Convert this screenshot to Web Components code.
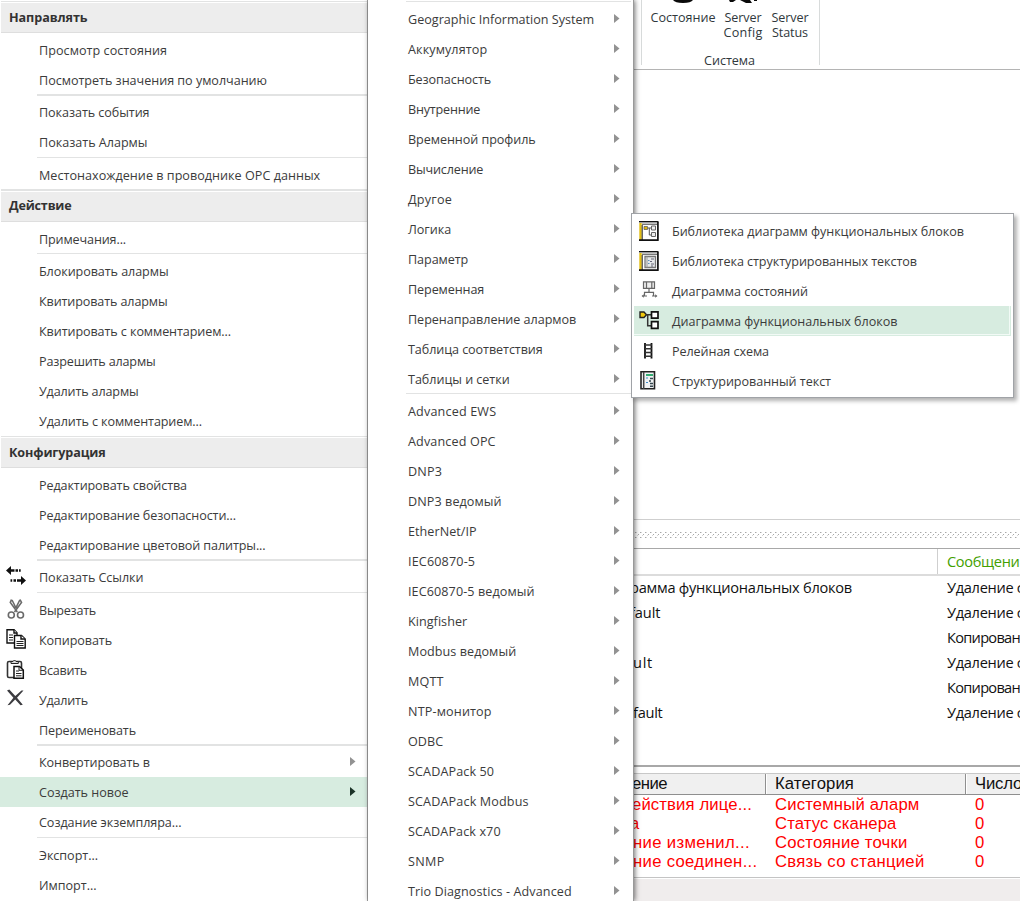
<!DOCTYPE html>
<html lang="ru">
<head>
<meta charset="utf-8">
<title>Context menu</title>
<style>
html,body{margin:0;height:901px;overflow:hidden;background:#fff}
body{font-family:"Open Sans","Noto Sans",sans-serif;font-size:12.6px;color:#3b3b3b}
</style>
</head>
<body>
<app-screen></app-screen>
<script>
/* Text set to a given advance width */
class FitText extends HTMLElement{
  connectedCallback(){
    const r=this.attachShadow({mode:'open'});
    r.innerHTML='<style>:host{display:inline-block;white-space:pre}</style><span><slot></slot></span>';
    const w=+this.getAttribute('w'),n=this.textContent.length;
    if(w){const nat=r.querySelector('span').getBoundingClientRect().width;this.style.letterSpacing=((w-nat)/n).toFixed(3)+'px';}
  }
}
const LIB='<path d="M1 1.500h18v17.500H1z" fill="#fff"/><path d="M.3 2h2.400v17H.3z" fill="#e3bd10"/><path d="M3.200 4v15" stroke="#222"/><path d="M0 .7h19.500" stroke="#111" stroke-width="1.400"/><path d="M3 3.300h15" stroke="#777" stroke-width="1.500"/><path d="M18.900 1v18.200M0 19.200h19.700" stroke="#111" stroke-width="1.700"/>';
const ICONS={
links:'<path d="M0 4.500 5 0v3.300h3.500v2.400H5V9zM9.500 3.300h2.500v2.400H9.500zM13 3.300h1.700v2.400H13z" fill="#111"/><path d="M20 14.500 15 10v3.300h-4v2.400h4V19zM7.500 13.300H10v2.400H7.500zM4.500 13.300h1.700v2.400H4.500z" fill="#111"/>',
cut:'<g fill="none" stroke="#6a6a6a" stroke-width="1.600"><path d="M5.500.5 4.300 3.500l7 9.500M14 .5l1.500 3-7 9.500M6 1l4 8M13.800 1l-4 8"/><ellipse cx="5.300" cy="16" rx="3" ry="3"/><ellipse cx="14.500" cy="16" rx="3" ry="3"/></g>',
copy:'<g fill="#fff" stroke="#111" stroke-width="1.400"><path d="M1 .8h7l3 3V14H1z"/><path d="M8 .8V4h3" /><path d="M8.500 6.500h7l3.700 3.500v9H8.500z"/><path d="M15 6.500V10h4"/></g><path d="M3 6h4M3 8.500h4M3 11h4M10.500 12.500h7M10.500 14.500h7M10.500 16.500h7" stroke="#222"/>',
paste:'<rect x="1.500" y="2.500" width="14" height="16" rx="1.500" fill="#fff" stroke="#333" stroke-width="1.600"/><path d="M5 4.500V2.500h2Q8.500-.5 10 2.500h2.300v2z" fill="#ddd" stroke="#222"/><path d="M8 7.500h5.500L17.300 11v8.300H8z" fill="#fff" stroke="#111" stroke-width="1.500"/><path d="M13 7.500V11.300H17M10 12h3M10 14.500h5.500M10 16.800h5.500" fill="none" stroke="#222"/>',
del:'<path d="M1 1.500 3.300.5l6 6.500L15.500 1.500l2 0L11 8.700l5.800 7-2.300.5L9.200 10.500 4 15.800l-2.500.4L7.400 8.800z" fill="#3c3c40"/>',
fbdlib:LIB+'<path d="M5 5.500h3.500v3H5z" fill="#e0b513" stroke="#555" stroke-width=".7"/><path d="M8.500 7h3.500M10.300 7v7H12" fill="none" stroke="#555"/><path d="M12.500 5h4v4h-4zM12.500 11.500h4v4h-4z" fill="#eee" stroke="#666"/>',
stlib:LIB+'<path d="M6 5.500h10.500v11H6z" fill="#e6e8ea" stroke="#777" stroke-width="1.300"/><path d="M8 5.500v11" stroke="#999"/><path d="M12 8h3M11 10.500h2M12 13h3M12 15h2" stroke="#667"/><path d="M9 9.500h1.500M9 12.500h1.500" stroke="#5791c0"/>',
state:'<g fill="none" stroke="#666" stroke-width="1.200"><path d="M4.500.8h11v6.500h-11zM7.500.8v6.500M12.800.8v6.500" fill="#eee"/><path d="M10 7.300v4M5.500 15v-3.700h9V15M3 15h5M13 15h5"/></g><path d="m2.500 15 2.500-1.800v3.600zM18.500 15 16 13.200v3.600z" fill="#777"/>',
fbd:'<path d="M1 1h4l2.500 2.700L5 6.500H1z" fill="#f0c80c" stroke="#222" stroke-width="1.400"/><path d="M7.500 3.700H12M8.700 3.700v11H12" fill="none" stroke="#333" stroke-width="1.500"/><path d="M12.500.9h6.500v6.300h-6.500zM12.500 10.700h6.500v6.600h-6.500z" fill="#fff" stroke="#111" stroke-width="1.700"/>',
ladder:'<path d="M6 2v15.500M12.500 2v15.500" stroke="#111" stroke-width="1.800"/><path d="M6 4h7M6 7.800h7M6 11.500h7M6 15.200h7" stroke="#333" stroke-width="1.500"/>',
st:'<path d="M2 .8h13.500v17H2z" fill="#f1f3f4" stroke="#222" stroke-width="1.600"/><path d="M4.700 1v17" stroke="#444" stroke-width="1.500"/><path d="M7 4h7" stroke="#33ad73" stroke-width="2"/><path d="M11 7.500h3M10 10h2M11 12.500h3M11 15.300h3" stroke="#36474f" stroke-width="1.400"/><path d="M7 7h2M7 11.500h2" stroke="#3f8cc8" stroke-width="1.200"/>'
};
class MenuItem extends HTMLElement{
  connectedCallback(){
    const i=this.getAttribute('icon'),arrow=this.hasAttribute('sub');
    this.attachShadow({mode:'open'}).innerHTML=`<style>
:host{display:flex;height:30px;align-items:center;flex:none;position:relative;color:#3b3b3b;line-height:17px}
:host([active]){background:#d7ece0;box-shadow:var(--hs,none)}
.i{width:20px;height:20px;margin:0 0 var(--ib,2px) var(--ix,6px);flex:none;overflow:visible}
.g{width:calc(var(--tx,39px) - var(--ix,6px) - 20px);flex:none}
.t{flex:1;white-space:nowrap;padding-top:1px}
.a{width:6px;height:9px;margin:0 var(--ar,11px) var(--ab,1px) 0}
</style><svg class="i" viewBox="0 0 20 20">${ICONS[i]||''}</svg><span class="g"></span><span class="t"><slot></slot></span>${arrow?`<svg class="a" viewBox="0 0 6 9"><path d="M0 0 5.500 4.500 0 9z" fill="${this.hasAttribute('active')?'#1c3328':'#929292'}"/></svg>`:''}`;
  }
}
class MenuHeader extends HTMLElement{
  connectedCallback(){
    const t=+this.getAttribute('top')||1;
    this.attachShadow({mode:'open'}).innerHTML=`<style>
:host{display:block;flex:none;margin-top:${1-t}px;border-top:${t}px solid #e2e3e3;padding:1px 0 2px;margin-left:1px}
div{box-sizing:border-box;height:30px;background:#ededed;border-bottom:1px solid #dedede;padding:${2-t}px 0 0 8px;font-weight:700;line-height:28px;color:#333}
</style><div><slot></slot></div>`;
  }
}
class MenuRule extends HTMLElement{
  connectedCallback(){
    const css={thick:'height:2px;margin-top:-1px;margin-bottom:1px',up:'height:1px;margin-top:-1px;margin-bottom:2px',thin:'height:1px;margin-bottom:2px'}[this.getAttribute('kind')];
    this.attachShadow({mode:'open'}).innerHTML=`<style>
:host{display:block;flex:none;background:#e2e3e3;margin-left:var(--rx,37px);margin-right:var(--rr,0);${css}}
</style>`;
  }
}
class ContextMenu extends HTMLElement{
  connectedCallback(){
    this.attachShadow({mode:'open'}).innerHTML=`<style>
:host{display:flex;flex-direction:column;box-sizing:border-box;background:#fff}
</style>`+this.rows();
  }
  rows(){
    const kinds={'-':'thin','=':'thick','^':'up'};
    return this.data().map(d=>{
      if(kinds[d])return`<menu-rule kind="${kinds[d]}"></menu-rule>`;
      const[t,w,o='']=d;
      if(o.startsWith('H'))return`<menu-header top="${o[1]}"><fit-text w="${w-9}">${t}</fit-text></menu-header>`;
      return`<menu-item ${o}><fit-text w="${w-this.x}">${t}</fit-text></menu-item>`;
    }).join('');
  }
}
class MainMenu extends ContextMenu{
  get x(){return 39}
  data(){return[['Направлять',87.5,'H1'],['Просмотр состояния',167],['Посмотреть значения по умолчанию',267],'=',['Показать события',149.5],['Показать Алармы',147.5],'-',['Местонахождение в проводнике ОРС данных',320.2],
  ['Действие',71.5,'H2'],['Примечания...',126],'^',['Блокировать алармы',168.5],['Квитировать алармы',167.5],['Квитировать с комментарием...',231],['Разрешить алармы',155.5],['Удалить алармы',138.5],['Удалить с комментарием...',202],
  ['Конфигурация',105.5,'H1'],['Редактировать свойства',187],['Редактирование безопасности...',236],['Редактирование цветовой палитры...',265.5],'=',['Показать Ссылки',143.5,'icon="links"'],'-',['Вырезать',96,'icon="cut"'],['Копировать',112,'icon="copy"'],['Всавить',87,'icon="paste"'],['Удалить',88,'icon="del"'],['Переименовать',136],'=',['Конвертировать в',150,'sub'],['Создать новое',128.5,'sub active'],['Создание экземпляра...',181.5],'-',['Экспорт...',98],['Импорт...',96.5]]}
}
class CreateMenu extends ContextMenu{
  get x(){return 408}
  data(){
    const s=a=>a.map(([t,w])=>[t,w+.2,'sub']);
    return[...s([['Geographic Information System',594],['Аккумулятор',487],['Безопасность',491],['Внутренние',480],['Временной профиль',535.500],['Вычисление',483],['Другое',452],['Логика',451],['Параметр',468],['Переменная',484],['Перенаправление алармов',576],['Таблица соответствия',542.5],['Таблицы и сетки',509.5]]),'^',
    ...s([['Advanced EWS',496],['Advanced OPC',495.500],['DNP3',442],['DNP3 ведомый',501.500],['EtherNet/IP',476.500],['IEC60870-5',475],['IEC60870-5 ведомый',534.500],['Kingfisher',467],['Modbus ведомый',516],['MQTT',443.500],['NTP-монитор',491.500],['ODBC',443],['SCADAPack 50',494],['SCADAPack Modbus',528.500],['SCADAPack x70',500.500],['SNMP',444.500],['Trio Diagnostics - Advanced',571.500]])]}
}
class LogicMenu extends ContextMenu{
  get x(){return 672}
  data(){return[['Библиотека диаграмм функциональных блоков',964,'icon="fbdlib"'],['Библиотека структурированных текстов',917,'icon="stlib"'],['Диаграмма состояний',808,'icon="state"'],['Диаграмма функциональных блоков',897.5,'icon="fbd" active'],['Релейная схема',769,'icon="ladder"'],['Структурированный текст',831,'icon="st"']]}
}
class RibbonGroup extends HTMLElement{
  connectedCallback(){
    this.attachShadow({mode:'open'}).innerHTML=`<style>
:host{display:block;height:69px;border-bottom:1px solid #b4b4b4;line-height:15px;color:#30383c;flex:none}
.g{width:177px;height:65px;margin-left:7px;border:solid #d8dbdb;border-width:0 1px;display:flex;flex-direction:column;box-sizing:content-box}
.b{display:grid;grid-template-columns:82px 38px 1fr;height:52px;flex:none;text-align:center;margin-right:1px}
.b div{display:flex;flex-direction:column;align-items:center}
svg{height:10px;width:36px;overflow:visible;display:block}
.n{text-align:center;line-height:16px;margin-right:2px;padding-top:1px}
</style><div class="g"><div class="b">
<div><svg viewBox="0 0 36 10"><path d="M8 0h20q-2 3-10 3T8 0z" fill="#0a0a0a"/></svg><fit-text w="65">Состояние</fit-text></div>
<div><svg viewBox="0 0 36 10"><path d="M4 0h7L8 2H5zM15 0h10l2 3h-6zM29 0h3v1h-3z" fill="#0a0a0a"/></svg><fit-text w="37">Server</fit-text><fit-text w="39">Config</fit-text></div>
<div><svg></svg><fit-text w="37">Server</fit-text><fit-text w="36">Status</fit-text></div>
</div><div class="n"><fit-text w="51">Система</fit-text></div></div>`;
  }
}
class DotSplitter extends HTMLElement{
  connectedCallback(){
    this.attachShadow({mode:'open'}).innerHTML=`<style>
:host{display:block;height:28px;border-top:1px solid #cfcfcf;border-bottom:1px solid #a8a8a8;flex:none}
svg{display:block;width:100%;height:6px;margin-top:12px}
</style><svg shape-rendering="crispEdges"><defs><pattern id="p" width="5" height="5" patternUnits="userSpaceOnUse"><path d="M1 0h1v1H1zM4 2h1v1H4z" fill="#a8a8a8"/><path d="M2 0h1v1H2zM3 3h1v1H3z" fill="#d8d8d8"/></pattern></defs><rect width="100%" height="6" fill="url(#p)"/></svg>`;
  }
}
class EventLog extends HTMLElement{
  connectedCallback(){
    const d=['Удаление с',76.5],k=['Копирован',73];
    const r=[[-4,'рамма функциональных блоков',222,d],[-4,'fault',30.5,d],[0,'','',k],[-1,'ult',20,d],[0,'','',k],[-1,'fault',29.5,d]];
    this.attachShadow({mode:'open'}).innerHTML=`<style>
:host{display:block;height:216px;font-size:14.6px;color:#111;flex:none;overflow:hidden;border-bottom:2px solid #a8a8a8}
div{display:grid;grid-template-columns:304px 82px;height:25px;line-height:25px}
.h{border-bottom:2px solid #dcdcdc;height:25px;line-height:25px;color:#43a000;margin-bottom:-1px}
.h span:first-child{border-right:1px solid #cfcfcf}
span{white-space:nowrap}span+span{padding-left:9px}
</style><div class="h"><span></span><span><fit-text w="72.500">Сообщени</fit-text></span></div>`+r.map(([x,a,w,[b,v]])=>`<div><span style="margin-left:${x}px;margin-right:${-x}px">${a?`<fit-text w="${w}">${a}</fit-text>`:''}</span><span><fit-text w="${v}">${b}</fit-text></span></div>`).join('');
  }
}
class AlarmList extends HTMLElement{
  connectedCallback(){
    const r=[['ействия лице...',120,-2,'Системный аларм',144.500],['а',9,-4,'Статус сканера',121.500],['ние изменил...',117,-1,'Состояние точки',132.500],['ние соединен...',124.500,-1,'Связь со станцией',149.500]];
    this.attachShadow({mode:'open'}).innerHTML=`<style>
:host{display:block;font:16.7px "Liberation Sans",sans-serif;color:#f00;flex:none;padding-top:6px;height:104px;border-bottom:1px solid #c4c4c4;overflow:hidden}
div{display:grid;grid-template-columns:132px 200px 54px;height:19px;line-height:20px}
.h{height:20px;line-height:20px;color:#111;background:#f0f0f0;border-top:1px solid #c8c8c8;border-bottom:1px solid #8f8f8f}
.h span{border-right:1px solid #8f8f8f;box-shadow:1px 0 #fff}
.h span:last-child{border:0;box-shadow:none}
span{white-space:nowrap;padding-left:9px}span:first-child{padding:0}
</style><div class="h"><span><fit-text w="35" style="margin-left:-2px">ение</fit-text></span><span><fit-text w="79">Категория</fit-text></span><span><fit-text w="47">Число</fit-text></span></div>`+r.map(([a,w,x,b,v])=>`<div><span><fit-text w="${w}" style="margin-left:${x}px">${a}</fit-text></span><span><fit-text w="${v}">${b}</fit-text></span><span>0</span></div>`).join('');
  }
}
class AppScreen extends HTMLElement{
  connectedCallback(){
    this.attachShadow({mode:'open'}).innerHTML=`<style>
:host{display:grid;grid-template-columns:368px 266px 386px;width:1020px;height:901px;overflow:hidden;position:relative}
main-menu{border-right:1px solid #a3a3a3;padding-top:1px}
create-menu{border-right:1px solid #999;box-shadow:1px 0 5px rgba(0,0,0,.55);z-index:1;--tx:40px;--ar:13px;--rx:38px;--rr:2px;overflow:hidden;min-width:0}
create-menu::before{content:"";height:1px;margin:1px 2px 2px 38px;background:#e2e3e3;flex:none}
.work{display:flex;flex-direction:column;min-width:0;overflow:hidden}
.canvas{height:449px;flex:none}
.foot{flex:1;background:#f0eded;margin-top:1px}
logic-menu{position:absolute;left:631px;top:213px;width:383px;height:185px;border:1px solid #a0a3a7;padding:2px;z-index:2;box-shadow:3px 3px 4px rgba(0,0,0,.3);--ix:5px;--ib:0px;--tx:38px;--hs:inset 0 -1px #d7ece0,inset -1px 0 #d7ece0,inset 0 -2px #f2faf6,inset -2px 0 #f2faf6}
</style>
<main-menu></main-menu><create-menu></create-menu>
<div class="work"><ribbon-group></ribbon-group><div class="canvas"></div><dot-splitter></dot-splitter><event-log></event-log><alarm-list></alarm-list><div class="foot"></div></div>
<logic-menu></logic-menu>`;
  }
}
customElements.define('fit-text',FitText);
customElements.define('menu-item',MenuItem);
customElements.define('menu-header',MenuHeader);
customElements.define('menu-rule',MenuRule);
customElements.define('main-menu',MainMenu);
customElements.define('create-menu',CreateMenu);
customElements.define('logic-menu',LogicMenu);
customElements.define('ribbon-group',RibbonGroup);
customElements.define('dot-splitter',DotSplitter);
customElements.define('event-log',EventLog);
customElements.define('alarm-list',AlarmList);
customElements.define('app-screen',AppScreen);
</script>
</body>
</html>
